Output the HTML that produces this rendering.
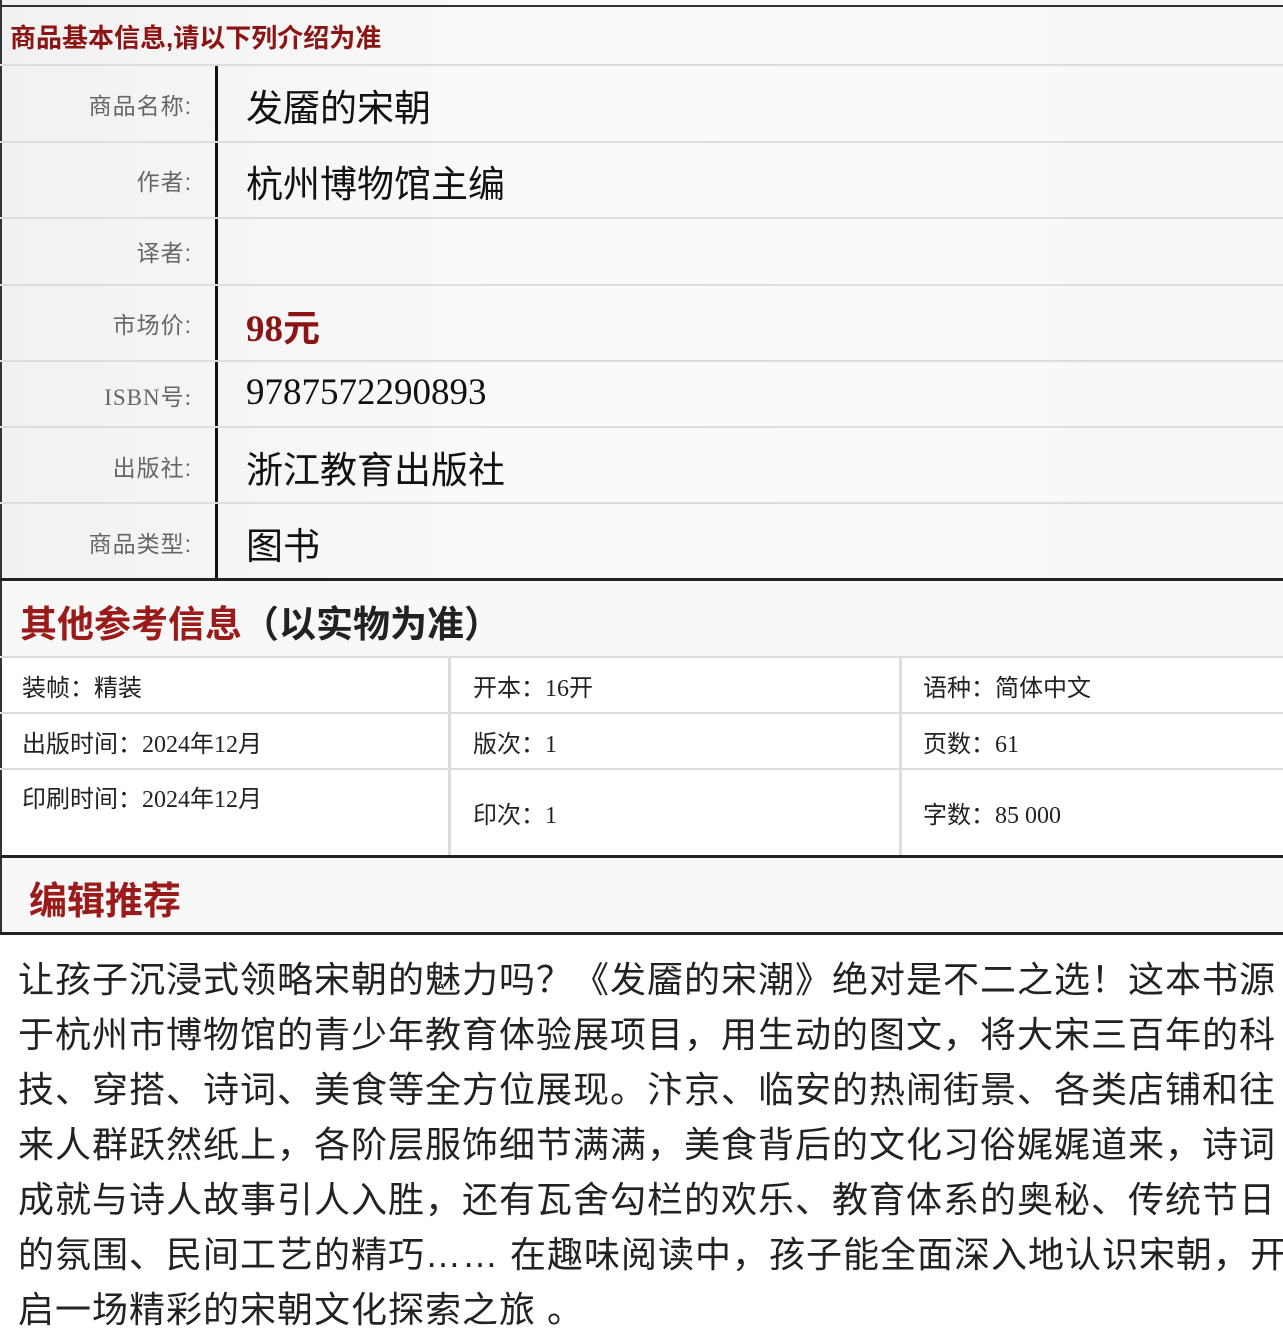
<!DOCTYPE html>
<html><head><meta charset="utf-8"><style>
*{margin:0;padding:0;box-sizing:border-box}
body{width:1283px;height:1340px;overflow:hidden;background:#fff;position:relative;font-family:"Liberation Serif","Noto Sans CJK SC",serif}
.a{position:absolute;white-space:nowrap}
.hl{position:absolute;left:0;width:1283px;height:2px;background:#ddd}
.tk{position:absolute;left:0;width:1283px;height:3px;background:#222}
.lab{position:absolute;left:0;width:192px;text-align:right;font-family:"Liberation Sans","Noto Sans CJK SC",sans-serif;font-size:23px;letter-spacing:1px;color:#666}
.val{position:absolute;left:246px;font-family:"Liberation Serif","Noto Sans CJK SC",serif;font-size:37px;color:#111}
.c{position:absolute;font-size:24px;color:#222;font-family:"Liberation Serif","Noto Sans CJK SC",serif}
.p{position:absolute;left:18px;font-family:"Liberation Sans","Noto Sans CJK SC",sans-serif;font-size:36px;letter-spacing:1px;color:#222;white-space:nowrap}
</style></head><body>
<div class="a" style="left:0;top:0;width:1283px;height:580px;background:linear-gradient(90deg,#f1f1f1,#fafafa 40%,#f8f8f8);border-left:2px solid #333"></div>
<div class="a" style="left:0;top:5px;width:1283px;height:2px;background:#333"></div>
<div class="a" style="left:10px;top:18px;font-family:'Liberation Sans','Noto Sans CJK SC',sans-serif;font-size:26px;font-weight:bold;color:#8b1414">商品基本信息,请以下列介绍为准</div>
<div class="hl" style="top:64px"></div>
<div class="a" style="left:215px;top:66px;width:3px;height:514px;background:#111"></div>
<div class="hl" style="top:141px"></div><div class="hl" style="top:217px"></div><div class="hl" style="top:284px"></div><div class="hl" style="top:360px"></div><div class="hl" style="top:426px"></div><div class="hl" style="top:502px"></div>
<div class="lab" style="top:87px">商品名称:</div><div class="val" style="top:78px;font-family:'Liberation Sans','Noto Sans CJK SC',sans-serif">发靥的宋朝</div>
<div class="lab" style="top:163px">作者:</div><div class="val" style="top:154px;font-family:'Liberation Sans','Noto Sans CJK SC',sans-serif">杭州博物馆主编</div>
<div class="lab" style="top:234px">译者:</div>
<div class="lab" style="top:306px">市场价:</div><div class="val" style="top:298px;color:#8b1414;font-weight:bold">98元</div>
<div class="lab" style="top:378px;font-family:'Liberation Serif','Noto Sans CJK SC',serif">ISBN号:</div><div class="val" style="top:371px">9787572290893</div>
<div class="lab" style="top:449px">出版社:</div><div class="val" style="top:440px;font-family:'Liberation Sans','Noto Sans CJK SC',sans-serif">浙江教育出版社</div>
<div class="lab" style="top:525px">商品类型:</div><div class="val" style="top:516px;font-family:'Liberation Sans','Noto Sans CJK SC',sans-serif">图书</div>
<div class="tk" style="top:578px"></div>
<div class="a" style="left:0;top:581px;width:1283px;height:76px;background:#f8f8f8;border-left:2px solid #333"></div>
<div class="a" style="left:20px;top:594px;font-family:'Liberation Sans','Noto Sans CJK SC',sans-serif;font-size:37px;font-weight:bold;color:#222"><span style="color:#9b1a1a">其他参考信息</span>（以实物为准）</div>
<div class="hl" style="top:656px"></div>
<div class="a" style="left:0;top:658px;width:2px;height:198px;background:#333"></div>
<div class="a" style="left:448px;top:658px;width:3px;height:198px;background:#ddd"></div>
<div class="a" style="left:899px;top:658px;width:3px;height:198px;background:#ddd"></div>
<div class="hl" style="top:712px"></div><div class="hl" style="top:768px"></div>
<div class="c" style="left:22px;top:668px">装帧：精装</div><div class="c" style="left:473px;top:668px">开本：16开</div><div class="c" style="left:923px;top:668px">语种：简体中文</div>
<div class="c" style="left:22px;top:724px">出版时间：2024年12月</div><div class="c" style="left:473px;top:724px">版次：1</div><div class="c" style="left:923px;top:724px">页数：61</div>
<div class="c" style="left:22px;top:779px">印刷时间：2024年12月</div><div class="c" style="left:473px;top:795px">印次：1</div><div class="c" style="left:923px;top:795px">字数：85 000</div>
<div class="tk" style="top:855px"></div>
<div class="a" style="left:0;top:858px;width:1283px;height:75px;background:#f8f8f8;border-left:2px solid #333"></div>
<div class="a" style="left:29px;top:870px;font-family:'Liberation Sans','Noto Sans CJK SC',sans-serif;font-size:38px;font-weight:bold;color:#9b1a1a">编辑推荐</div>
<div class="tk" style="top:932px"></div>
<div class="p" style="top:951px">让孩子沉浸式领略宋朝的魅力吗？《发靥的宋潮》绝对是不二之选！这本书源</div>
<div class="p" style="top:1006px">于杭州市博物馆的青少年教育体验展项目，用生动的图文，将大宋三百年的科</div>
<div class="p" style="top:1061px">技、穿搭、诗词、美食等全方位展现。汴京、临安的热闹街景、各类店铺和往</div>
<div class="p" style="top:1116px">来人群跃然纸上，各阶层服饰细节满满，美食背后的文化习俗娓娓道来，诗词</div>
<div class="p" style="top:1171px">成就与诗人故事引人入胜，还有瓦舍勾栏的欢乐、教育体系的奥秘、传统节日</div>
<div class="p" style="top:1226px">的氛围、民间工艺的精巧…… 在趣味阅读中，孩子能全面深入地认识宋朝，开</div>
<div class="p" style="top:1281px">启一场精彩的宋朝文化探索之旅 。</div>
</body></html>
